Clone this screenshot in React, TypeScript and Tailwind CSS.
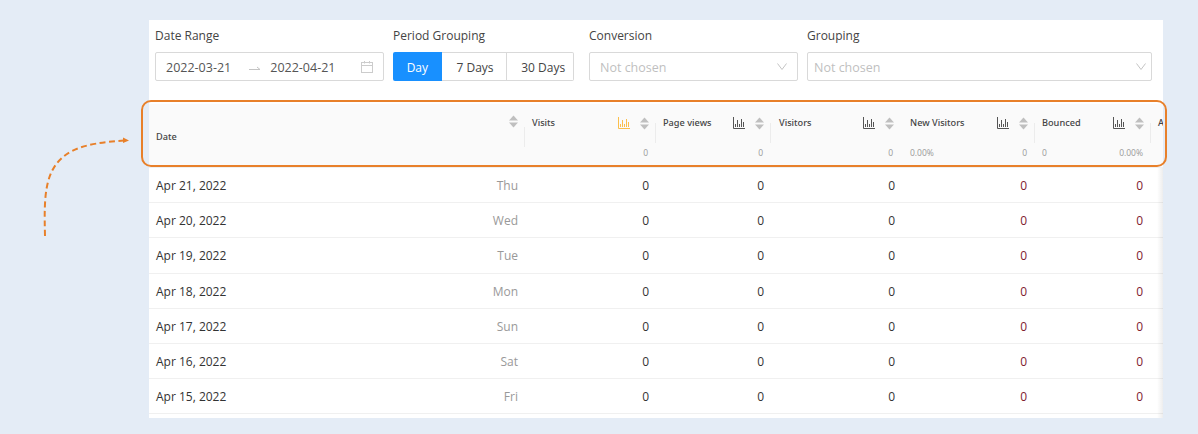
const font = { fontFamily: '"Open Sans", "Noto Sans", sans-serif' };
const headFont = { fontFamily: '"Noto Sans", "Open Sans", sans-serif' };

const cols = [
  { name: "Visits", w: "w-[130px]", pad: "pl-[7px] pr-[6px]", icon: "#fbbf4c", foot: ["", "0"], sep: true, cell: "pr-[6px] text-[#333333]" },
  { name: "Page views", w: "w-[115px]", pad: "pl-[8px] pr-[6px]", icon: "#555555", foot: ["", "0"], sep: true, cell: "pr-[6px] text-[#333333]" },
  { name: "Visitors", w: "w-[131px]", pad: "pl-[9px] pr-[7px]", icon: "#555555", foot: ["", "0"], sep: false, cell: "pr-[6px] text-[#333333]" },
  { name: "New Visitors", w: "w-[133px]", pad: "pl-[9px] pr-[6px]", icon: "#555555", foot: ["0.00%", "0"], sep: true, cell: "pr-[7px] text-[#80202e]" },
  { name: "Bounced", w: "w-[116px]", pad: "pl-[8px] pr-[6px]", icon: "#555555", foot: ["0", "0.00%"], sep: true, cell: "pr-[7px] text-[#80202e]" },
];

const rows = [
  ["Apr 21, 2022", "Thu"],
  ["Apr 20, 2022", "Wed"],
  ["Apr 19, 2022", "Tue"],
  ["Apr 18, 2022", "Mon"],
  ["Apr 17, 2022", "Sun"],
  ["Apr 16, 2022", "Sat"],
  ["Apr 15, 2022", "Fri"],
];

function Bars({ color }: { color: string }) {
  return (
    <svg width="12" height="12" viewBox="0 0 12 12" fill="none" stroke={color} strokeWidth="1">
      <path d="M0.5 0V11.5H12" />
      <path d="M2.5 10V7M4.5 10V3M6.5 10V7M8.5 10V2M10.5 10V5" />
    </svg>
  );
}

function Sort() {
  return (
    <svg width="9" height="13" viewBox="0 0 9 13" fill="#bfbfbf">
      <path d="M4.5 0.5L9 5.5H0z" />
      <path d="M4.5 12.5L9 7.5H0z" />
    </svg>
  );
}

function Chevron() {
  return (
    <svg width="10" height="7" viewBox="0 0 10 7" fill="none" stroke="#c4c4c4" strokeWidth="1">
      <path d="M0.5 0.5L5 6.5L9.5 0.5" />
    </svg>
  );
}

function Calendar() {
  return (
    <svg width="12" height="12" viewBox="0 0 12 12" fill="none" stroke="#cccccc" strokeWidth="1">
      <rect x="0.5" y="1.5" width="11" height="10" />
      <path d="M0.5 4.5H11.5M3.5 0V2.5M8.5 0V2.5" />
    </svg>
  );
}

function Arrow() {
  return (
    <svg width="12" height="5" viewBox="0 0 12 5" fill="none" stroke="#c4c4c4" strokeWidth="1">
      <path d="M0 3.5H11L8 1" />
    </svg>
  );
}

function Select({ label, className, pad }: { label: string; className: string; pad: string }) {
  return (
    <div className={className}>
      <div className="pt-[1px] text-[12px] leading-[17px] text-[#444444]">{label}</div>
      <div className={`mt-[8px] flex h-[29px] items-center justify-between rounded-[2px] border border-[#d9d9d9] bg-white ${pad}`}>
        <span className="pt-[3px] text-[12.5px] text-[#bfbfbf]">Not chosen</span>
        <Chevron />
      </div>
    </div>
  );
}

export default function App() {
  return (
    <div className="relative h-[434px] w-[1198px] overflow-hidden bg-[#e4ecf6]" style={font}>
      <div className="absolute left-[149px] top-[20px] h-[398px] w-[1014px] overflow-hidden bg-white">
        <div className="flex pl-[6px] pt-[6px]">
          <div className="w-[229px]">
            <div className="pt-[1px] text-[12px] leading-[17px] text-[#444444]">Date Range</div>
            <div className="mt-[8px] flex h-[29px] items-center rounded-[2px] border border-[#d9d9d9] pl-[10px] pr-[10px] text-[12.5px] text-[#555555]">
              <span className="pt-[3px]">2022-03-21</span>
              <span className="ml-[18px] flex w-[12px] pt-[3px]"><Arrow /></span>
              <span className="ml-[9px] pt-[3px]">2022-04-21</span>
              <span className="ml-auto"><Calendar /></span>
            </div>
          </div>
          <div className="ml-[9px] w-[181px]">
            <div className="pt-[1px] text-[12px] leading-[17px] text-[#444444]">Period Grouping</div>
            <div className="mt-[8px] flex h-[29px] text-[12px] text-[#444444]">
              <div className="flex w-[49px] items-center justify-center rounded-l-[2px] bg-[#1890ff] pt-[2px] text-white">Day</div>
              <div className="flex w-[66px] items-center justify-center border-y border-r border-[#d9d9d9] pl-[2px] pt-[2px]">7 Days</div>
              <div className="flex w-[67px] items-center justify-center rounded-r-[2px] border-y border-r border-[#d9d9d9] pl-[6px] pt-[2px]">30 Days</div>
            </div>
          </div>
          <Select label="Conversion" className="ml-[15px] w-[209px]" pad="pl-[10px] pr-[10px]" />
          <Select label="Grouping" className="ml-[9px] w-[345px]" pad="pl-[6px] pr-[5px]" />
        </div>

        <div className="mt-[23px] w-[1014px]">
          <div className="flex h-[64px] border-b border-[#f0f0f0] bg-[#fafafa] text-[9.2px] text-[#444444]">
            <div className="relative flex w-[376px] shrink-0 items-center pl-[7px] pt-[2px]">
              <span className="font-medium" style={headFont}>Date</span>
              <span className="absolute right-[7px] top-[11px]"><Sort /></span>
              <span className="absolute right-0 top-[23px] h-[20px] w-px bg-[#ececec]" />
            </div>
            {cols.map((c) => (
              <div key={c.name} className={`relative shrink-0 ${c.w} ${c.pad}`}>
                <div className="flex h-[37px] items-center pt-[1px]">
                  <span className="font-medium" style={headFont}>{c.name}</span>
                  <span className="ml-auto mr-[10px]"><Bars color={c.icon} /></span>
                  <Sort />
                </div>
                <div className="flex justify-between pr-[1px] pt-[6px] text-[8.5px] text-[#999999]">
                  <span>{c.foot[0]}</span>
                  <span>{c.foot[1]}</span>
                </div>
                {c.sep && <span className="absolute -right-px top-[19px] h-[20px] w-px bg-[#ececec]" />}
              </div>
            ))}
            <div className="flex-1 overflow-hidden pl-[8px] pt-[12px] font-medium" style={headFont}>A</div>
          </div>

          {rows.map((r) => (
            <div key={r[0]} className="flex h-[35.2px] items-center border-b border-[#f0f0f0] pt-[2px] text-[12px] text-[#333333]">
              <div className="flex w-[376px] shrink-0 justify-between pl-[7px] pr-[7px]">
                <span>{r[0]}</span>
                <span className="text-[#999999]">{r[1]}</span>
              </div>
              {cols.map((c) => (
                <div key={c.name} className={`shrink-0 text-right ${c.w} ${c.cell}`}>0</div>
              ))}
            </div>
          ))}
        </div>
        <div className="absolute bottom-0 right-0 top-[148px] w-[6px] bg-gradient-to-l from-[#00000012] to-transparent" />
      </div>

      <div className="absolute left-[141px] top-[100px] h-[67px] w-[1026px] rounded-[10px] border-2 border-[#e8802a]" />

      <svg className="absolute left-[40px] top-[134px]" width="95" height="106" viewBox="0 0 95 106" fill="none">
        <path d="M5 102C4 60 4 32 32 17C46 10 64 8 84 6.5" stroke="#e8802a" strokeWidth="2" strokeDasharray="6 3.5" />
        <path d="M83 3.5L89 6.5L83 9z" fill="#e8802a" />
      </svg>
    </div>
  );
}
